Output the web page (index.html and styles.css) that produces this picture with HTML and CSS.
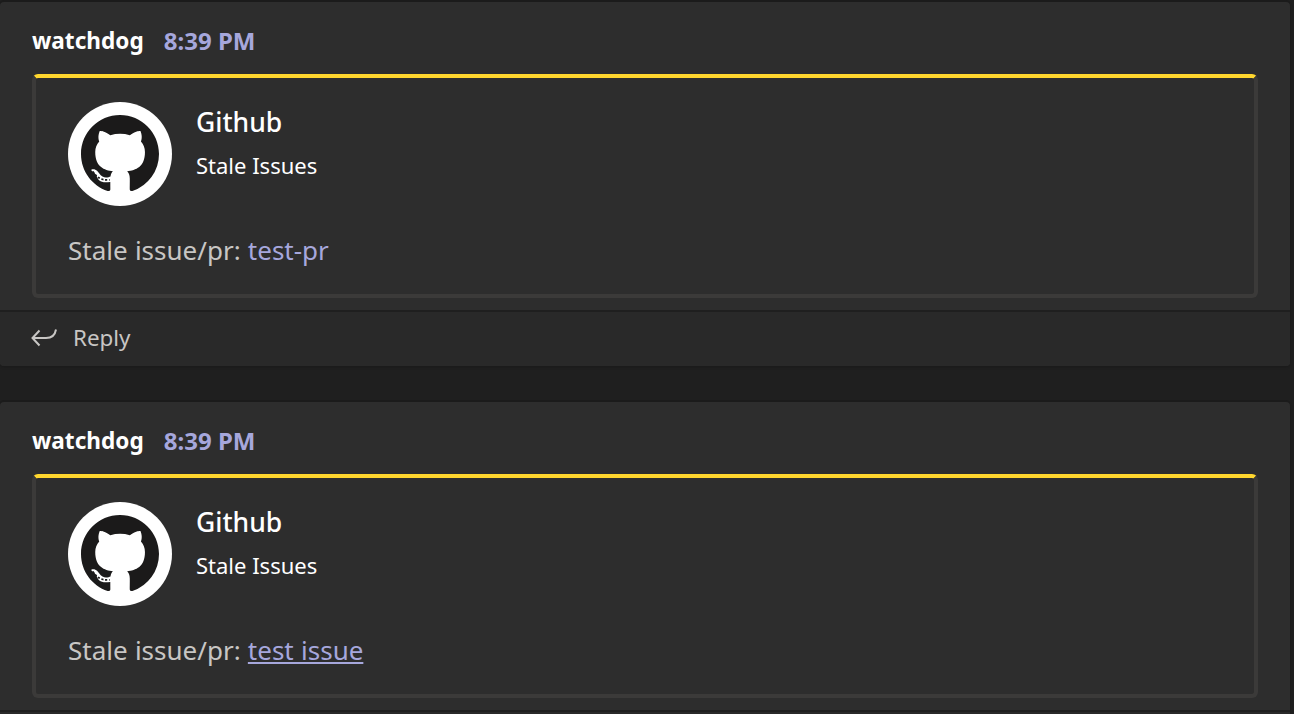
FILE: index.html
```html
<!DOCTYPE html>
<html lang="en">
<head>
    <meta charset="UTF-8">
    <title>watchdog</title>
    <link rel="stylesheet" href="styles.css">
</head>
<body>
    <div class="message">
        <div class="message-head">
            <span class="author">watchdog</span>
            <span class="time">8:39 PM</span>
        </div>
        <div class="card">
            <div class="card-head">
                <svg class="avatar" viewBox="0 0 104 104">
                    <circle cx="52" cy="52" r="52" fill="#fff"/>
                    <g transform="translate(13 13) scale(4.875)">
                        <path fill="#1b1a1a" d="M8 0C3.58 0 0 3.58 0 8c0 3.54 2.29 6.53 5.47 7.59.4.07.55-.17.55-.38 0-.19-.01-.82-.01-1.49-2.01.37-2.53-.49-2.69-.94-.09-.23-.48-.94-.82-1.13-.28-.15-.68-.52-.01-.53.63-.01 1.08.58 1.23.82.72 1.21 1.87.87 2.33.66.07-.52.28-.87.51-1.07-1.78-.2-3.64-.89-3.64-3.95 0-.87.31-1.59.82-2.15-.08-.2-.36-1.02.08-2.12 0 0 .67-.21 2.2.82.64-.18 1.32-.27 2-.27.68 0 1.36.09 2 .27 1.53-1.04 2.2-.82 2.2-.82.44 1.1.16 1.92.08 2.12.51.56.82 1.27.82 2.15 0 3.07-1.87 3.75-3.65 3.95.29.25.54.73.54 1.48 0 1.07-.01 1.93-.01 2.2 0 .21.15.46.55.38A8.013 8.013 0 0016 8c0-4.42-3.58-8-8-8z"/>
                        <path class="tail-notches" d="M2.4 11.6C3 12.3 3.6 13.5 5.9 13.3"/>
                    </g>
                </svg>
                <div class="card-titles">
                    <div class="card-title">Github</div>
                    <div class="card-subtitle">Stale Issues</div>
                </div>
            </div>
            <p class="card-text">Stale issue/pr: <a class="link" href="#">test-pr</a></p>
        </div>
        <div class="reply">
            <svg class="reply-icon" viewBox="0 0 28 28">
                <path d="M9.5 6.5 2.5 14 9.5 21.5M2.5 14H16C21 14 25 11.5 26 5.5"/>
            </svg>
            <span>Reply</span>
        </div>
    </div>

    <div class="message last">
        <div class="message-head">
            <span class="author">watchdog</span>
            <span class="time">8:39 PM</span>
        </div>
        <div class="card">
            <div class="card-head">
                <svg class="avatar" viewBox="0 0 104 104">
                    <circle cx="52" cy="52" r="52" fill="#fff"/>
                    <g transform="translate(13 13) scale(4.875)">
                        <path fill="#1b1a1a" d="M8 0C3.58 0 0 3.58 0 8c0 3.54 2.29 6.53 5.47 7.59.4.07.55-.17.55-.38 0-.19-.01-.82-.01-1.49-2.01.37-2.53-.49-2.69-.94-.09-.23-.48-.94-.82-1.13-.28-.15-.68-.52-.01-.53.63-.01 1.08.58 1.23.82.72 1.21 1.87.87 2.33.66.07-.52.28-.87.51-1.07-1.78-.2-3.64-.89-3.64-3.95 0-.87.31-1.59.82-2.15-.08-.2-.36-1.02.08-2.12 0 0 .67-.21 2.2.82.64-.18 1.32-.27 2-.27.68 0 1.36.09 2 .27 1.53-1.04 2.2-.82 2.2-.82.44 1.1.16 1.92.08 2.12.51.56.82 1.27.82 2.15 0 3.07-1.87 3.75-3.65 3.95.29.25.54.73.54 1.48 0 1.07-.01 1.93-.01 2.2 0 .21.15.46.55.38A8.013 8.013 0 0016 8c0-4.42-3.58-8-8-8z"/>
                        <path class="tail-notches" d="M2.4 11.6C3 12.3 3.6 13.5 5.9 13.3"/>
                    </g>
                </svg>
                <div class="card-titles">
                    <div class="card-title">Github</div>
                    <div class="card-subtitle">Stale Issues</div>
                </div>
            </div>
            <p class="card-text">Stale issue/pr: <a class="link underlined" href="#">test issue</a></p>
        </div>
        <div class="reply cut"></div>
    </div>
</body>
</html>
```

FILE: styles.css
```css
html, body {
    height: 100%;
    overflow: hidden;
}
body {
    margin: 0;
    padding: 2px 4px 0 0;
    box-sizing: border-box;
    background-color: #1f1f1f;
    color: #fff;
    font-family: 'Noto Sans', 'Open Sans', sans-serif;
}
.message {
    background-color: #2d2d2d;
    border-radius: 4px;
    margin-bottom: 36px;
    box-shadow: 0 -2px 0 #1b1b1b, 0 1px 3px rgba(0,0,0,0.2);
}
.message.last {
    margin-bottom: 0;
}
.message-head {
    display: flex;
    align-items: center;
    gap: 20px;
    height: 72px;
    padding: 4px 0 0 32px;
    box-sizing: border-box;
    font-size: 22.6px;
    font-weight: 700;
}
.time {
    color: #a6a7dc;
    font-size: 24px;
}
.card {
    margin: 0 32px;
    height: 224px;
    box-sizing: border-box;
    border: 4px solid #3b3a39;
    border-top-color: #ffd62e;
    border-radius: 6px;
    padding: 24px 32px 0;
}
.card-head {
    display: flex;
    gap: 24px;
}
.avatar {
    width: 104px;
    height: 104px;
    flex: none;
}
.tail-notches {
    fill: none;
    stroke: #1b1a1a;
    stroke-width: 0.35;
    stroke-dasharray: 0.45 0.35;
}
.card-title {
    font-size: 26.5px;
    font-weight: 500;
    line-height: 40px;
}
.card-subtitle {
    font-size: 22px;
    line-height: 34px;
    margin-top: 6px;
}
.card-text {
    margin: 22px 0 0;
    font-size: 26px;
    line-height: 44px;
    color: #c8c6c4;
    word-spacing: 0.5px;
}
.link {
    color: #a6a7dc;
    text-decoration: none;
}
.underlined {
    text-decoration: underline;
}
.reply {
    display: flex;
    align-items: center;
    gap: 15px;
    height: 56px;
    margin-top: 12px;
    border-top: 2px solid #1f1f1f;
    box-sizing: border-box;
    padding: 0 0 3px 30px;
    background-color: #292929;
    border-radius: 0 0 4px 4px;
    color: #c8c6c4;
    font-size: 22.4px;
}
.reply.cut {
    height: 4px;
    padding: 0;
    border-radius: 0;
}
.reply-icon {
    width: 28px;
    height: 28px;
    fill: none;
    stroke: #c8c6c4;
    stroke-width: 2;
}
```
